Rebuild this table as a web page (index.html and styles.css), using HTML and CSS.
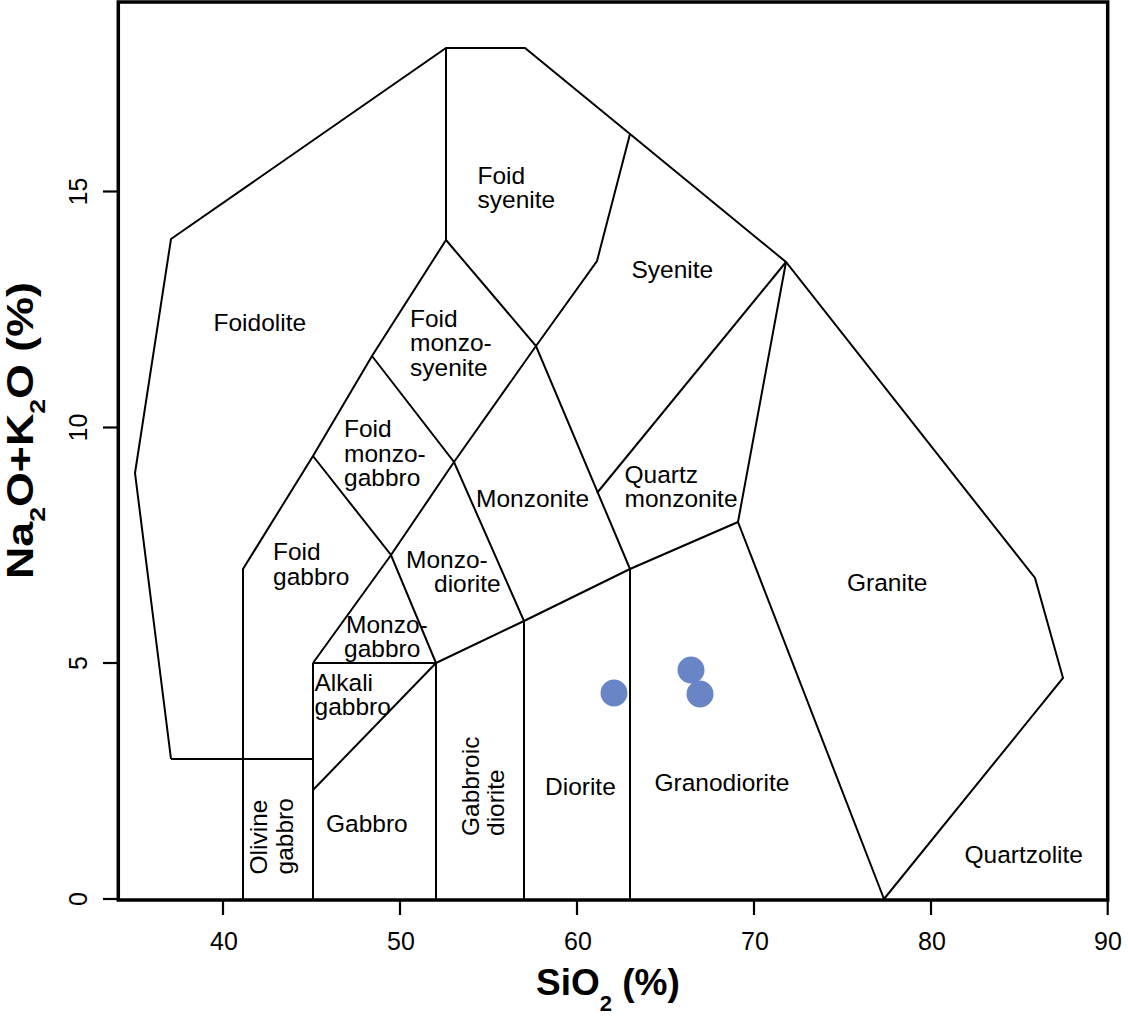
FILE: index.html
```html
<!DOCTYPE html>
<html lang="en">
<head>
<meta charset="utf-8">
<title>TAS diagram (plutonic)</title>
<link rel="stylesheet" href="styles.css">
</head>
<body>
<figure class="chart">
<svg class="tas" width="1128" height="1020" viewBox="0 0 1128 1020" xmlns="http://www.w3.org/2000/svg">
  <!-- field boundaries -->
  <g class="fields">
    <polyline points="171,759 135,473 171,239 446,48 525,48 630,134 786,262 1035,578 1063,678 884,899"/>
    <polyline points="171,759 313,759"/>
    <polyline points="243,899 243,569 313,456 372,356 446,240 446,48"/>
    <polyline points="313,456 391,555 436,663"/>
    <polyline points="372,356 454,462 524,621"/>
    <polyline points="446,240 536,346 630,569"/>
    <polyline points="536,346 597,261 630,134"/>
    <polyline points="313,663 391,555 454,462 536,346"/>
    <polyline points="597,493 786,262"/>
    <polyline points="786,262 738,522 884,899"/>
    <polyline points="436,663 524,621 630,569 738,522"/>
    <polyline points="313,663 436,663"/>
    <polyline points="313,790 436,663"/>
    <polyline points="313,663 313,899"/>
    <polyline points="436,663 436,899"/>
    <polyline points="524,621 524,899"/>
    <polyline points="630,569 630,899"/>
  </g>

  <!-- field names -->
  <g class="region">
    <text x="213.5" y="331">Foidolite</text>
    <text x="477.5" y="183.5">Foid</text>
    <text x="477.5" y="207.5">syenite</text>
    <text x="631.5" y="277.5">Syenite</text>
    <text x="410" y="326.5">Foid</text>
    <text x="410" y="351">monzo-</text>
    <text x="410" y="375.5">syenite</text>
    <text x="344" y="437">Foid</text>
    <text x="344" y="461.5">monzo-</text>
    <text x="344" y="486">gabbro</text>
    <text x="273" y="560">Foid</text>
    <text x="273" y="584.5">gabbro</text>
    <text x="476" y="507">Monzonite</text>
    <text x="624.5" y="482.5">Quartz</text>
    <text x="624.5" y="507">monzonite</text>
    <text x="847" y="590.5">Granite</text>
    <text x="406" y="567.5">Monzo-</text>
    <text x="434" y="591.5">diorite</text>
    <text x="346" y="632.5">Monzo-</text>
    <text x="344" y="657">gabbro</text>
    <text x="314.5" y="691">Alkali</text>
    <text x="314.5" y="715">gabbro</text>
    <text x="326" y="831.5">Gabbro</text>
    <text x="545" y="795">Diorite</text>
    <text x="654.5" y="790.5">Granodiorite</text>
    <text x="964.5" y="863">Quartzolite</text>
    <text transform="translate(266.5,874.5) rotate(-90)">Olivine</text>
    <text transform="translate(292.5,874.5) rotate(-90)">gabbro</text>
    <text transform="translate(478.5,836) rotate(-90)">Gabbroic</text>
    <text transform="translate(504,836) rotate(-90)">diorite</text>
  </g>

  <!-- samples -->
  <g class="samples">
    <circle cx="614" cy="693" r="13.5"/>
    <circle cx="691" cy="670" r="13.5"/>
    <circle cx="700" cy="694" r="13.5"/>
  </g>

  <!-- frame -->
  <rect class="frame" x="118.3" y="2" width="989.4" height="898"/>

  <!-- x axis -->
  <g class="ticks">
    <line x1="223" y1="900" x2="223" y2="915"/>
    <line x1="400" y1="900" x2="400" y2="915"/>
    <line x1="577" y1="900" x2="577" y2="915"/>
    <line x1="754" y1="900" x2="754" y2="915"/>
    <line x1="931" y1="900" x2="931" y2="915"/>
    <line x1="1107.7" y1="900" x2="1107.7" y2="915"/>
    <line x1="103" y1="899" x2="118" y2="899"/>
    <line x1="103" y1="663" x2="118" y2="663"/>
    <line x1="103" y1="427.5" x2="118" y2="427.5"/>
    <line x1="103" y1="191.5" x2="118" y2="191.5"/>
  </g>
  <g class="tick-label x-labels">
    <text x="224" y="950">40</text>
    <text x="401" y="950">50</text>
    <text x="578" y="950">60</text>
    <text x="755" y="950">70</text>
    <text x="932" y="950">80</text>
    <text x="1108" y="950">90</text>
  </g>
  <g class="tick-label">
    <text transform="translate(87,899) rotate(-90)">0</text>
    <text transform="translate(87,663) rotate(-90)">5</text>
    <text transform="translate(87,427.5) rotate(-90)">10</text>
    <text transform="translate(87,191.5) rotate(-90)">15</text>
  </g>

  <!-- axis titles -->
  <text class="axis-title" x="536" y="995">SiO<tspan class="sub" dy="16">2</tspan><tspan dy="-16"> (%)</tspan></text>
  <text class="axis-title" transform="translate(33,579) rotate(-90)" textLength="297" lengthAdjust="spacingAndGlyphs">Na<tspan class="sub" dy="12">2</tspan><tspan dy="-12">O+K</tspan><tspan class="sub" dy="12">2</tspan><tspan dy="-12">O (%)</tspan></text>
</svg>
</figure>
</body>
</html>
```

FILE: styles.css
```css
html, body {
  margin: 0;
  padding: 0;
  background: #ffffff;
}

.chart {
  margin: 0;
  width: 1128px;
  height: 1020px;
}

.tas {
  display: block;
  font-family: "Liberation Sans", Arial, Helvetica, sans-serif;
}

.fields polyline {
  fill: none;
  stroke: #000000;
  stroke-width: 2;
  stroke-linejoin: miter;
}

.frame {
  fill: none;
  stroke: #000000;
  stroke-width: 3.5;
}

.ticks line {
  stroke: #000000;
  stroke-width: 2.2;
}

.region text {
  font-size: 24.5px;
  fill: #000000;
}

.tick-label text {
  font-size: 25px;
  fill: #000000;
  text-anchor: middle;
}

.samples circle {
  fill: #6a85c5;
  stroke: none;
}

.axis-title {
  font-size: 37px;
  font-weight: bold;
  fill: #000000;
}

.axis-title .sub {
  font-size: 22px;
}
```
